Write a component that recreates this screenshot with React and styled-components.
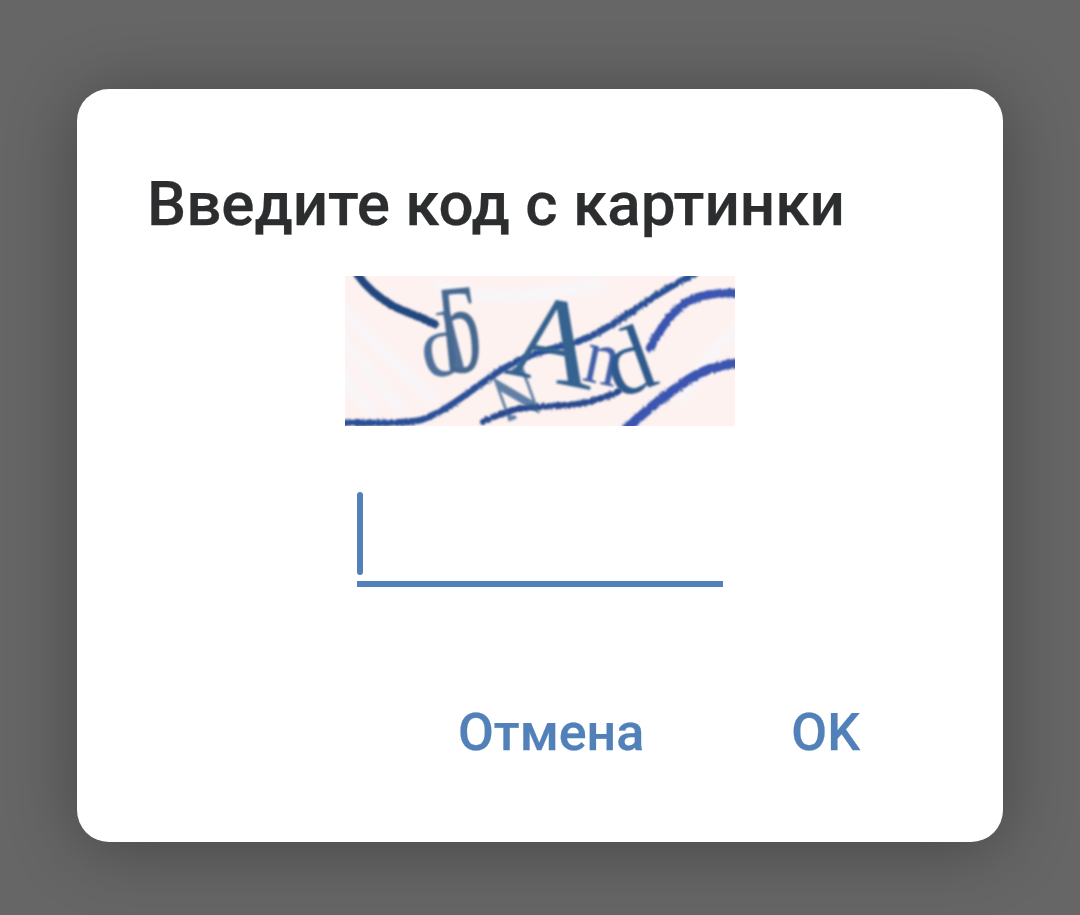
import React from 'react';
import styled, { createGlobalStyle } from 'styled-components';

const GlobalStyle = createGlobalStyle`
  html, body {
    margin: 0;
    padding: 0;
    background: #666666;
  }
  body {
    font-family: Roboto, 'Noto Sans', sans-serif;
  }
`;

const Screen = styled.div`
  width: 1080px;
  height: 915px;
  padding: 89px 77px 73px;
  box-sizing: border-box;
  overflow: hidden;
`;

const Dialog = styled.div`
  width: 926px;
  height: 753px;
  box-sizing: border-box;
  padding: 82px 71px 0;
  background: #fff;
  border-radius: 32px;
  box-shadow: 0 6px 70px rgba(0, 0, 0, 0.32);
  display: flex;
  flex-direction: column;
`;

const Title = styled.h2`
  margin: 0 0 0 -1px;
  font-size: 62px;
  line-height: 66px;
  font-weight: 500;
  color: #2c2d2e;
  white-space: nowrap;
  -webkit-text-stroke: 0.25px #2c2d2e;
`;

const Captcha = styled.svg`
  display: block;
  width: 390px;
  height: 150px;
  margin: 39px 0 0 197px;
`;

const CodeField = styled.div`
  width: 366px;
  height: 95px;
  margin: 66px 0 0 209px;
  box-sizing: border-box;
  border-bottom: 6px solid #5181b8;
`;

const Caret = styled.div`
  width: 6px;
  height: 83px;
  border-radius: 3px;
  background: #5181b8;
`;

const Actions = styled.div`
  display: flex;
  justify-content: flex-end;
  gap: 147px;
  margin: 118px 0 0;
  padding-right: 72px;
`;

const ActionButton = styled.button`
  padding: 0;
  border: 0;
  background: none;
  font-family: inherit;
  font-size: 52px;
  line-height: 56px;
  font-weight: 500;
  color: #5181b8;
  -webkit-text-stroke: 0.25px #5181b8;
`;

const CaptchaImage = () => (
  <Captcha viewBox="0 0 390 150">
    <defs>
      <filter id="rough" x="-5%" y="-5%" width="110%" height="110%">
        <feTurbulence type="fractalNoise" baseFrequency="0.35" numOctaves="2" seed="4" result="noise" />
        <feDisplacementMap in="SourceGraphic" in2="noise" scale="3.5" />
        <feGaussianBlur stdDeviation="0.9" />
      </filter>
      <filter id="soft" x="-5%" y="-5%" width="110%" height="110%">
        <feGaussianBlur stdDeviation="0.9" />
      </filter>
      <filter id="wash" x="-10%" y="-10%" width="120%" height="120%">
        <feGaussianBlur stdDeviation="5" />
      </filter>
      <clipPath id="frame">
        <rect width="390" height="150" />
      </clipPath>
    </defs>
    <g clipPath="url(#frame)">
      <rect width="390" height="150" fill="#fdf2f0" />
      <g filter="url(#wash)" fill="none" stroke="#f6f8fd" strokeWidth="8">
        <path d="M-10 30 C 20 55 50 90 90 125" />
        <path d="M-10 60 C 15 85 35 110 60 135" />
        <path d="M-10 95 C 5 110 15 120 30 135" />
        <path d="M90 8 C 140 30 200 20 260 6" />
        <path d="M335 125 C 350 105 370 65 395 55" />
      </g>
      <g filter="url(#rough)" fill="none" strokeLinecap="round">
        <path d="M12 -2 C 22 12 34 22 48 30 C 60 36 74 40 90 48" stroke="#23467f" strokeWidth="8" />
        <path d="M-2 147 C 30 147 58 148 76 144 C 100 136 124 116 150 98 C 176 80 200 74 226 68 C 246 62 272 46 292 32 C 310 20 328 8 350 -2" stroke="#2c4f96" strokeWidth="6.5" />
        <path d="M305 72 C 316 52 326 36 342 26 C 356 18 372 17 394 17" stroke="#3a55b0" strokeWidth="8.5" />
        <path d="M138 146 C 150 140 160 136 172 133 C 190 130 212 131 232 128 C 246 126 260 122 274 115" stroke="#2a4a8f" strokeWidth="6" />
        <path d="M282 152 C 300 136 314 124 330 113 C 346 101 362 90 394 87" stroke="#3a55b0" strokeWidth="9.5" />
      </g>
      <g filter="url(#soft)" fontFamily="'Liberation Serif', 'DejaVu Serif', serif">
        <text transform="translate(82 104) rotate(-14)" fontSize="90" fill="#50709a">d</text>
        <text transform="translate(100 98) rotate(-6) scale(0.62 1)" fontSize="128" fill="#46688f">ƃ</text>
        <text transform="translate(196 140) rotate(-110) scale(1.9 1)" fontSize="70" fill="#2f5a8c" fillOpacity="0.75">z</text>
        <text transform="translate(158 97) rotate(11)" fontSize="124" fill="#34628f">A</text>
        <text transform="translate(236 104) rotate(12) scale(0.85 1)" fontSize="80" fill="#4360a8">n</text>
        <text transform="translate(272 123) rotate(-20)" fontSize="94" fill="#2f5a8c">d</text>
      </g>
    </g>
  </Captcha>
);

export default function App() {
  return (
    <>
      <GlobalStyle />
      <Screen>
        <Dialog>
          <Title>Введите код с картинки</Title>
          <CaptchaImage />
          <CodeField>
            <Caret />
          </CodeField>
          <Actions>
            <ActionButton>Отмена</ActionButton>
            <ActionButton>OK</ActionButton>
          </Actions>
        </Dialog>
      </Screen>
    </>
  );
}
